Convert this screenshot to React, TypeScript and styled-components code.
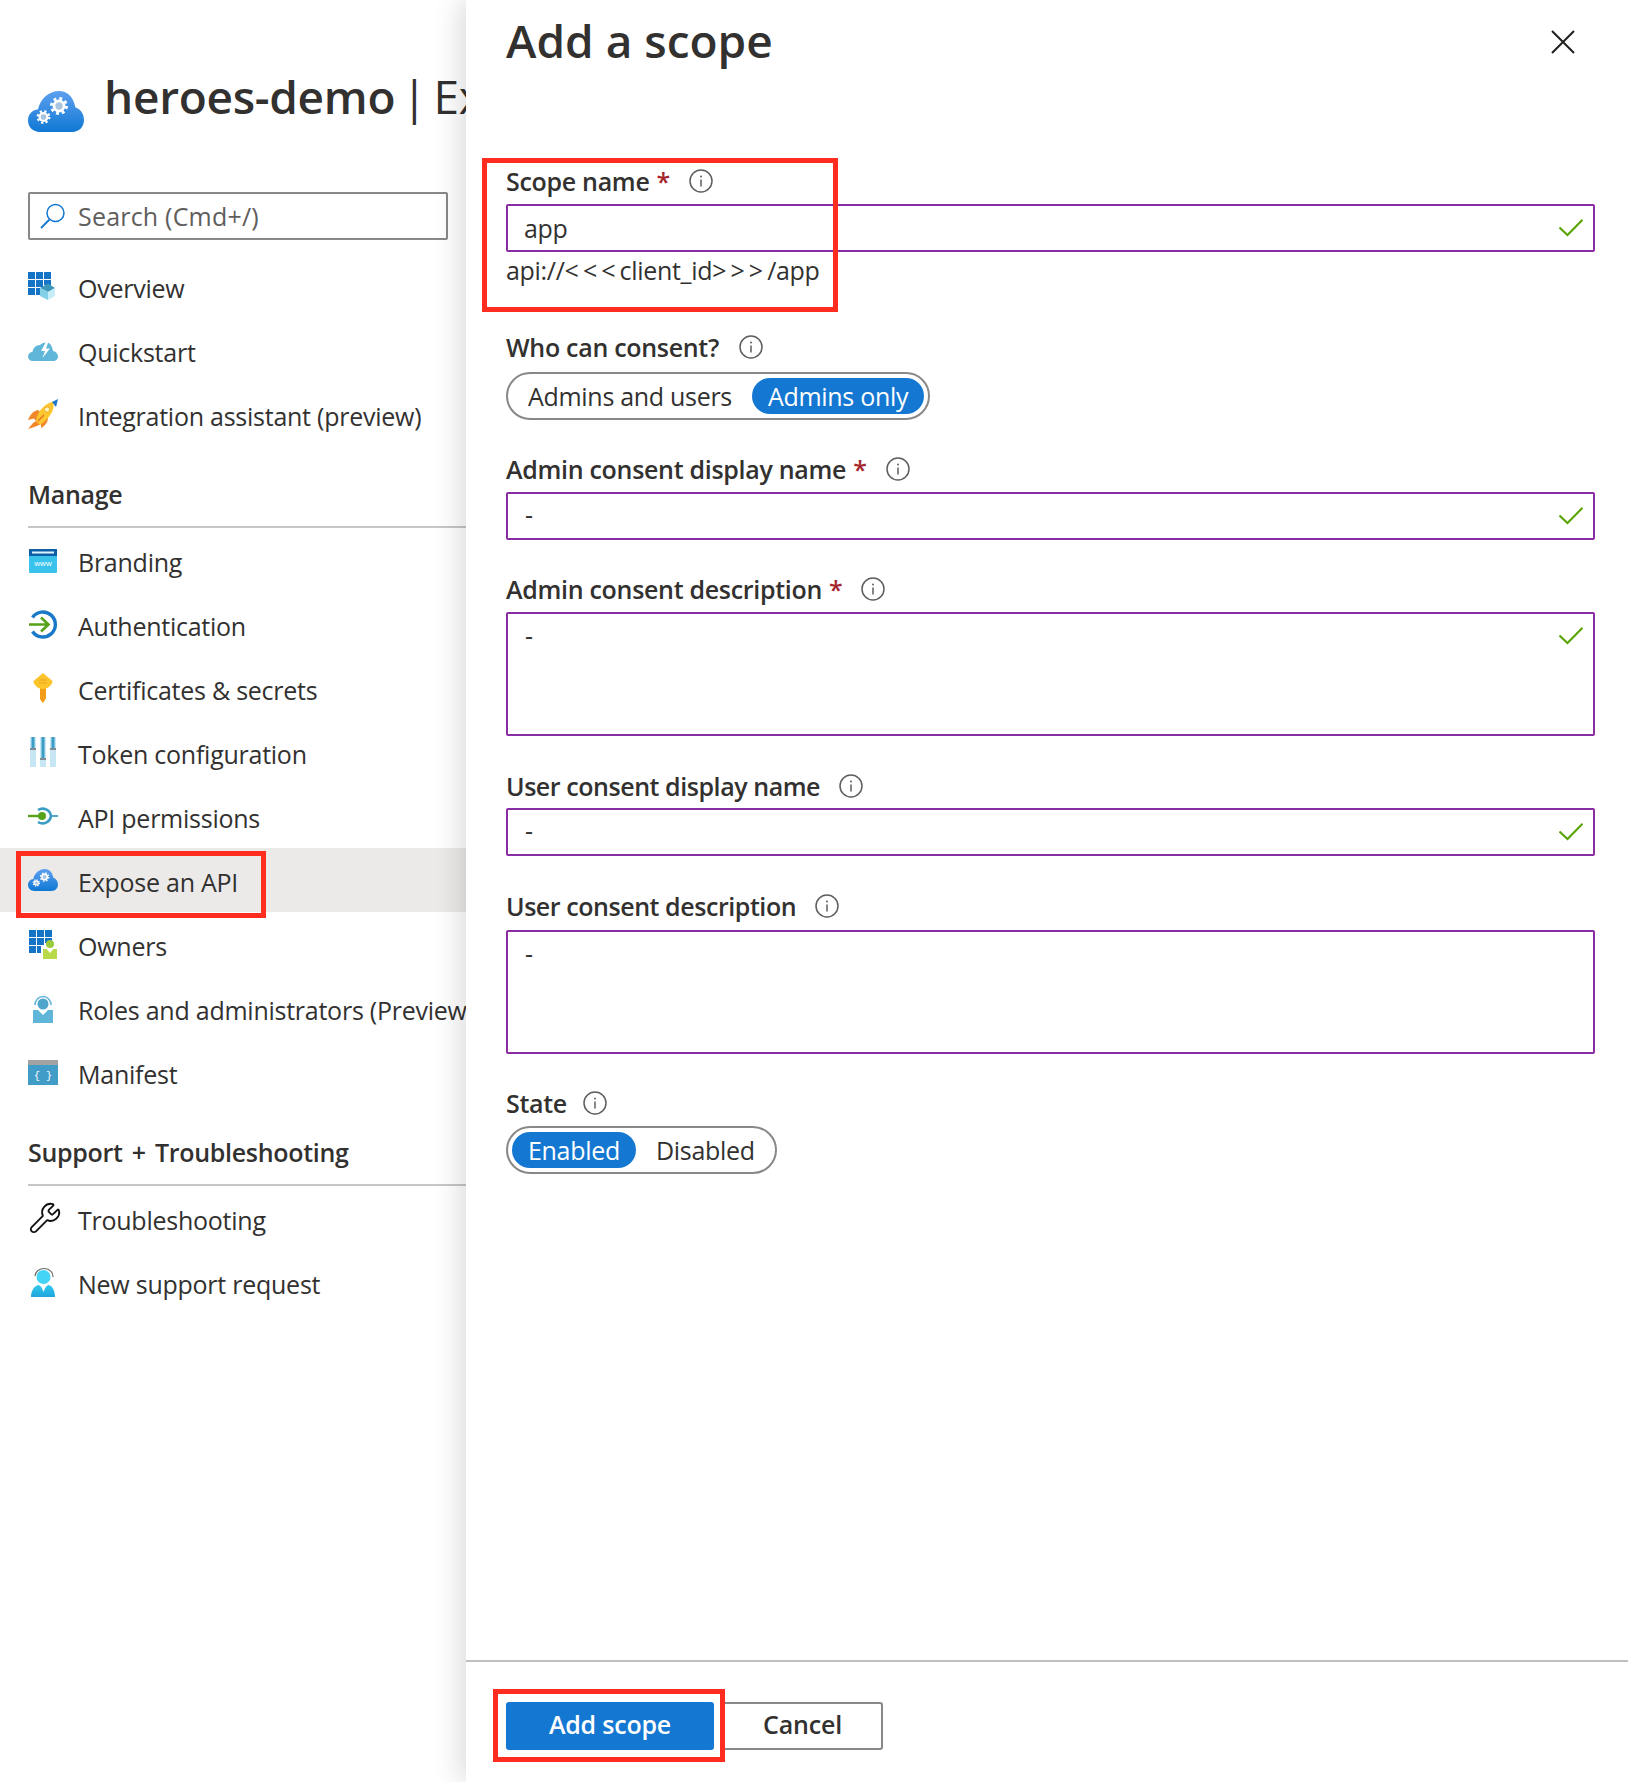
import React from 'react'
import styled, { createGlobalStyle } from 'styled-components'
import { Wrench } from 'lucide-react'

const GlobalStyle = createGlobalStyle`
  html, body {
    margin: 0;
    padding: 0;
    background: #fff;
  }
  * { box-sizing: border-box; }
`

const BLUE = '#1478d2'
const PURPLE = '#8a2da3'

const Gear = ({ x, y, r }: { x: number; y: number; r: number }) => (
  <g>
    <circle cx={x} cy={y} r={r * 0.92} fill="#fff" />
    <circle cx={x} cy={y} r={r * 1.08} fill="none" stroke="#fff" strokeWidth={r * 0.4} strokeDasharray={`${r * 0.42} ${r * 0.43}`} />
    <circle cx={x} cy={y} r={r * 0.52} fill="#a9c4de" />
  </g>
)

const CloudGears = ({ size }: { size: number }) => (
  <svg width={size} height={size * 0.75} viewBox="0 0 56 42">
    <defs>
      <linearGradient id={`cloud${size}`} x1="0" y1="0" x2="0" y2="1">
        <stop offset="0" stopColor="#5ea0ef" />
        <stop offset="1" stopColor="#0f78d4" />
      </linearGradient>
    </defs>
    <path d="M12 41C5 41 0 36 0 29.500C0 23.500 4 19 10 18.500C12 8 21 0 31 0C39 0 45 5 47.500 16.500C52.500 18 56 23 56 29C56 36 51 41 44 41Z" fill={`url(#cloud${size})`} />
    <Gear x={15.500} y={26} r={5.400} />
    <Gear x={31} y={15} r={7} />
  </svg>
)

const GridSquares = ({ fill }: { fill: string }) => (
  <g fill={fill}>
    <rect x="0" y="1" width="7" height="7" />
    <rect x="8" y="1" width="7" height="7" />
    <rect x="16" y="1" width="7" height="7" />
    <rect x="0" y="9" width="7" height="7" />
    <rect x="8" y="9" width="7" height="7" />
    <rect x="16" y="9" width="7" height="5" />
    <rect x="0" y="17" width="7" height="7" />
    <rect x="8" y="17" width="4" height="7" />
  </g>
)

const OverviewIcon = () => (
  <svg width="30" height="30" viewBox="0 0 30 30">
    <GridSquares fill="#1473c5" />
    <path d="M12 17L20 12.500L27 17L20 21Z" fill="#3b97b8" />
    <path d="M12 17L20 21V29L12 25Z" fill="#83cfe8" />
    <path d="M27 17L20 21V29L27 25Z" fill="#c6edf8" />
  </svg>
)

const QuickstartIcon = () => (
  <svg width="30" height="30" viewBox="0 0 30 30">
    <path d="M5 26C2 26 0 24 0 21.500C0 19 2 17 4.500 17C5 13 8 10 12 10C14 8 19 6 22 9C24 11 24.500 14 25 16C28 16.500 30 19 30 21.500C30 24 28 26 25 26Z" fill="#5fb6d9" />
    <path d="M19 5L13 16H17L14.500 23L22 13.500H18L21 5Z" fill="#fff" />
  </svg>
)

const RocketIcon = () => (
  <svg width="30" height="30" viewBox="0 0 30 30">
    <path d="M10 11C5 12 2 16 0 21L6 19.500L8 22L5 24L0 30C6 28 10 27 13 25L13 29C17 27 20 23 20 19Z" fill="#f0872a" />
    <path d="M8 22C9 13 16 5 25 2.500C28 10 21 20 12 26Z" fill="#fcc72e" />
    <circle cx="19" cy="10.500" r="2.600" fill="#fff4c2" stroke="#e8a21a" strokeWidth="0.8" />
    <path d="M24 3L30 0L28 8Z" fill="#1b78c8" />
    <path d="M10 22L16 16" stroke="#e8772a" strokeWidth="1.600" />
  </svg>
)

const BrandingIcon = () => (
  <svg width="30" height="30" viewBox="0 0 30 30">
    <rect x="1" y="4" width="28" height="24" rx="1" fill="#38c2ec" />
    <rect x="1" y="4" width="28" height="7" fill="#0f5fa6" />
    <rect x="4" y="6.500" width="22" height="2" fill="#dff3fb" />
    <text x="15" y="20.500" fontFamily="'Liberation Sans', sans-serif" fontSize="8" textAnchor="middle" fill="#fff">www</text>
  </svg>
)

const AuthIcon = () => (
  <svg width="30" height="30" viewBox="0 0 30 30">
    <path d="M4.500 8.500A12.500 12.500 0 1 1 4.500 22.500" fill="none" stroke="#1a78c8" strokeWidth="3.400" />
    <path d="M1 15.500H20M13 8.500L20.500 15.500L13 22.500" fill="none" stroke="#57a21b" strokeWidth="2.600" />
  </svg>
)

const KeyIcon = () => (
  <svg width="30" height="30" viewBox="0 0 30 30">
    <path d="M15 0L24.500 8C24.500 12 20 15 18 15.500V25L15 30L12 26V15.500C10 15 5.500 12 5.500 8Z" fill="#fcc52c" />
    <path d="M18 15.500V25L15 30L12 26V15.500C14 16.500 16 16.500 18 15.500Z" fill="#f39c18" />
    <path d="M11 7H19M11 10H19" stroke="#f0a020" strokeWidth="1" />
  </svg>
)

const TokenIcon = () => (
  <svg width="30" height="30" viewBox="0 0 30 30">
    <g fill="#c6e6f3">
      <rect x="2" y="0" width="6" height="30" />
      <rect x="12" y="0" width="6" height="30" />
      <rect x="22" y="0" width="6" height="30" />
    </g>
    <g fill="#3b9cc4">
      <rect x="3.500" y="0" width="3" height="11" />
      <rect x="13.500" y="0" width="3" height="21" />
      <rect x="23.500" y="0" width="3" height="11" />
    </g>
    <g fill="#7f8a92">
      <rect x="2" y="11" width="6" height="2" />
      <rect x="12" y="21" width="6" height="2" />
      <rect x="22" y="11" width="6" height="2" />
    </g>
  </svg>
)

const ApiIcon = () => (
  <svg width="30" height="30" viewBox="0 0 30 30">
    <path d="M10 9A8.500 8.500 0 0 1 23 15A8.500 8.500 0 0 1 10 21" fill="none" stroke="#3c9dc4" strokeWidth="2.600" />
    <path d="M23 15H30" stroke="#3c9dc4" strokeWidth="1.800" />
    <path d="M0 15H14" stroke="#57a21b" strokeWidth="2.400" />
    <circle cx="14" cy="15" r="4" fill="#57a21b" />
  </svg>
)

const OwnersIcon = () => (
  <svg width="30" height="30" viewBox="0 0 30 30">
    <g transform="translate(1 0)">
      <GridSquares fill="#1473c5" />
    </g>
    <circle cx="22" cy="15" r="4" fill="#9ccb3b" />
    <path d="M15 20L18.500 20L22 24L25.500 20L29 20V30H15Z" fill="#b8d94a" />
  </svg>
)

const RolesIcon = () => (
  <svg width="30" height="30" viewBox="0 0 30 30">
    <path d="M7 12A8 8.500 0 0 1 23 12" fill="none" stroke="#5fb6d9" strokeWidth="1.600" />
    <circle cx="15" cy="11" r="5.500" fill="#4fa5cc" />
    <path d="M5 17H10L15 22L20 17H25V30H5Z" fill="#5fb6d9" />
  </svg>
)

const ManifestIcon = () => (
  <svg width="30" height="30" viewBox="0 0 30 30">
    <rect x="0" y="3" width="30" height="25" fill="#429cc8" />
    <rect x="0" y="3" width="30" height="5" fill="#a3a3a3" />
    <text x="15" y="22" fontFamily="'Liberation Mono', monospace" fontSize="10" textAnchor="middle" fill="#fff">{'{ }'}</text>
  </svg>
)

const SupportIcon = () => (
  <svg width="30" height="30" viewBox="0 0 30 30">
    <defs>
      <linearGradient id="supportBody" x1="0" y1="0" x2="0" y2="1">
        <stop offset="0" stopColor="#32c8ee" />
        <stop offset="1" stopColor="#1fa5dc" />
      </linearGradient>
    </defs>
    <path d="M7 9A9 8 0 0 1 25 10" fill="none" stroke="#6b6b6b" strokeWidth="1.200" />
    <circle cx="15.500" cy="10" r="7" fill="#44d4f5" />
    <path d="M3 30C3 23 7 18 11 18L15.500 22L20 18C24 18 27 23 27 30Z" fill="url(#supportBody)" />
    <path d="M13.500 20H17.500L15.500 25Z" fill="#fff" />
  </svg>
)

const SearchIcon = () => (
  <svg width="26" height="26" viewBox="0 0 26 26">
    <circle cx="15.500" cy="10" r="8.500" fill="none" stroke={BLUE} strokeWidth="1.500" />
    <path d="M9.500 16.500L1 25" stroke={BLUE} strokeWidth="1.800" />
  </svg>
)

const InfoIcon = ({ gap = 20 }: { gap?: number }) => (
  <InfoWrap $gap={gap} viewBox="0 0 24 24">
    <circle cx="12" cy="12" r="11" fill="none" stroke="#605e5c" strokeWidth="1.500" />
    <path d="M12 10.500V17.500" stroke="#605e5c" strokeWidth="1.500" />
    <circle cx="12" cy="7.500" r="1" fill="#605e5c" />
  </InfoWrap>
)

const CheckIcon = ({ multiline }: { multiline?: boolean }) => (
  <CheckWrap $multiline={multiline} viewBox="0 0 24 18">
    <path d="M0.500 8.500L8.500 16L23.500 0.800" fill="none" stroke="#57a300" strokeWidth="2" />
  </CheckWrap>
)

const navTop = [
  { label: 'Overview', icon: <OverviewIcon /> },
  { label: 'Quickstart', icon: <QuickstartIcon /> },
  { label: 'Integration assistant (preview)', icon: <RocketIcon /> },
]

const navManage = [
  { label: 'Branding', icon: <BrandingIcon /> },
  { label: 'Authentication', icon: <AuthIcon /> },
  { label: 'Certificates & secrets', icon: <KeyIcon /> },
  { label: 'Token configuration', icon: <TokenIcon /> },
  { label: 'API permissions', icon: <ApiIcon /> },
  { label: 'Expose an API', icon: <CloudGears size={30} />, active: true },
  { label: 'Owners', icon: <OwnersIcon /> },
  { label: 'Roles and administrators (Preview)', icon: <RolesIcon /> },
  { label: 'Manifest', icon: <ManifestIcon /> },
]

const navSupport = [
  { label: 'Troubleshooting', icon: <Wrench size={34} strokeWidth={1.3} color="#111" /> },
  { label: 'New support request', icon: <SupportIcon /> },
]

interface NavItem {
  label: string
  icon: React.ReactNode
  active?: boolean
}

const NavList = ({ items }: { items: Array<NavItem> }) => (
  <nav>
    {items.map(item => (
      <NavRow key={item.label} $active={item.active}>
        <IconSlot>{item.icon}</IconSlot>
        <NavLabel>{item.label}</NavLabel>
      </NavRow>
    ))}
  </nav>
)

interface FieldModel {
  label: string
  value?: string
  required?: boolean
  valid?: boolean
  multiline?: boolean
  tight?: boolean
  top: number
  lift?: number
}

const FieldBlock = ({ label, value = '-', required, valid, multiline, tight, top, lift = 2 }: FieldModel) => (
  <Field $top={top}>
    <FieldLabel $lift={lift} $tight={tight}>
      {label}
      {required ? <Star>*</Star> : null}
      <InfoIcon gap={tight ? 19 : 20} />
    </FieldLabel>
    <InputBox $multiline={multiline}>
      <InputText $dash={value === '-'} $multiline={multiline}>{value}</InputText>
      {valid ? <CheckIcon multiline={multiline} /> : null}
    </InputBox>
  </Field>
)

const App = () => (
  <Page>
    <GlobalStyle />
    <Sidebar>
      <TitleRow>
        <TitleIcon><CloudGears size={56} /></TitleIcon>
        <Title><b>heroes-demo</b> | Expose an API</Title>
      </TitleRow>
      <SearchBox>
        <SearchIcon />
        <span>Search (Cmd+/)</span>
      </SearchBox>
      <TopNav>
        <NavList items={navTop} />
      </TopNav>
      <SectionHead $height={82}>Manage</SectionHead>
      <NavList items={navManage} />
      <SectionHead $height={82}>Support + Troubleshooting</SectionHead>
      <NavList items={navSupport} />
    </Sidebar>

    <Panel>
      <PanelHead>
        <PanelTitle>Add a scope</PanelTitle>
        <CloseIcon viewBox="0 0 24 24">
          <path d="M1 1L23 23M23 1L1 23" stroke="#201f1e" strokeWidth="2" />
        </CloseIcon>
      </PanelHead>

      <Form>
        <FieldBlock label="Scope name" value="app" required valid top={0} />
        <Helper>api://<Angle>&lt;&lt;&lt;</Angle>client_id<Angle>&gt;&gt;&gt;</Angle>/app</Helper>

        <Field $top={34}>
          <FieldLabel $lift={4} $tall>Who can consent?<InfoIcon /></FieldLabel>
          <Toggle>
            <ToggleOption>Admins and users</ToggleOption>
            <ToggleOption $on>Admins only</ToggleOption>
          </Toggle>
        </Field>

        <FieldBlock label="Admin consent display name" required valid top={28} />
        <FieldBlock label="Admin consent description" required valid multiline top={28} />
        <FieldBlock label="User consent display name" valid tight top={28} lift={0} />
        <FieldBlock label="User consent description" multiline tight top={30} lift={4} />

        <Field $top={26}>
          <FieldLabel $lift={0} $tall>State<InfoIcon gap={16} /></FieldLabel>
          <Toggle>
            <ToggleOption $on>Enabled</ToggleOption>
            <ToggleOption>Disabled</ToggleOption>
          </Toggle>
        </Field>
      </Form>

      <PanelFooter>
        <PrimaryButton>Add scope</PrimaryButton>
        <SecondaryButton>Cancel</SecondaryButton>
      </PanelFooter>
    </Panel>

    <Callout $x={482} $y={158} $w={356} $h={154} />
    <Callout $x={16} $y={851} $w={250} $h={67} />
    <Callout $x={493} $y={1689} $w={232} $h={73} />
  </Page>
)

const FONT = `'Open Sans', 'Noto Sans', sans-serif`

const Page = styled.div`
  position: relative;
  display: flex;
  width: 1628px;
  height: 1782px;
  overflow: hidden;
  font-family: ${FONT};
  color: #323130;
`

const Sidebar = styled.aside`
  flex: 0 0 466px;
  width: 466px;
  overflow: hidden;
`

const TitleRow = styled.div`
  display: flex;
  align-items: flex-start;
  gap: 20px;
  height: 192px;
  padding: 62px 0 0 28px;
  white-space: nowrap;
`

const TitleIcon = styled.div`
  flex: none;
  margin-top: 29px;
`

const Title = styled.h1`
  margin: 0;
  font-size: 46px;
  line-height: 68px;
  font-weight: 400;
  letter-spacing: -0.3px;
  word-spacing: -5px;

  b { font-weight: 600; }
`

const SearchBox = styled.div`
  display: flex;
  align-items: center;
  gap: 12px;
  width: 420px;
  height: 48px;
  margin-left: 28px;
  padding-left: 10px;
  border: 2px solid #8a8886;
  border-radius: 2px;
  font-size: 25px;
  letter-spacing: 0.2px;
  color: #605e5c;
`

const TopNav = styled.div`
  margin-top: 14px;
`

const NavRow = styled.div<{ $active?: boolean }>`
  display: flex;
  align-items: center;
  height: 64px;
  padding-left: 28px;
  background: ${p => (p.$active ? '#ebeae9' : 'transparent')};
  white-space: nowrap;
`

const IconSlot = styled.div`
  flex: none;
  display: flex;
  align-items: center;
  width: 50px;
  height: 30px;
`

const NavLabel = styled.span`
  padding-top: 4px;
  font-size: 25px;
  line-height: 36px;
  letter-spacing: -0.25px;
`

const SectionHead = styled.h2<{ $height: number }>`
  display: flex;
  align-items: flex-end;
  height: ${p => p.$height}px;
  margin: 0 0 0 28px;
  padding-bottom: 14px;
  border-bottom: 2px solid #c8c6c4;
  font-size: 25px;
  line-height: 36px;
  font-weight: 600;
  letter-spacing: -0.3px;
  word-spacing: 3px;
`

const Panel = styled.main`
  position: relative;
  flex: 1;
  display: flex;
  flex-direction: column;
  background: #fff;
  box-shadow: -6px 0 26px rgba(0, 0, 0, 0.14);
`

const PanelHead = styled.header`
  display: flex;
  justify-content: space-between;
  flex: 0 0 160px;
  padding: 6px 53px 0 40px;
`

const PanelTitle = styled.h1`
  margin: 0;
  font-size: 46px;
  line-height: 68px;
  font-weight: 600;
`

const CloseIcon = styled.svg`
  width: 24px;
  height: 24px;
  margin-top: 24px;
`

const Form = styled.div`
  flex: 1;
  padding: 0 33px 0 40px;
`

const Field = styled.div<{ $top: number }>`
  margin-top: ${p => p.$top}px;
`

const FieldLabel = styled.label<{ $tall?: boolean; $tight?: boolean; $lift: number }>`
  display: flex;
  align-items: center;
  height: ${p => (p.$tall ? 46 : 44)}px;
  padding-bottom: ${p => p.$lift}px;
  font-size: 25px;
  font-weight: 600;
  letter-spacing: ${p => (p.$tight ? -0.44 : -0.3)}px;
`

const Star = styled.span`
  margin: 0 -1px 0 7px;
  color: #a4262c;
`

const InfoWrap = styled.svg<{ $gap: number }>`
  flex: none;
  width: 24px;
  height: 24px;
  margin-left: ${p => p.$gap}px;
`

const InputBox = styled.div<{ $multiline?: boolean }>`
  display: flex;
  justify-content: space-between;
  align-items: ${p => (p.$multiline ? 'flex-start' : 'center')};
  height: ${p => (p.$multiline ? 124 : 48)}px;
  padding: ${p => (p.$multiline ? '5px 10px 0 16px' : '0 10px 0 16px')};
  border: 2px solid ${PURPLE};
  border-radius: 2px;
  font-size: 25px;
  line-height: 36px;
  letter-spacing: -0.3px;
`

const InputText = styled.span<{ $dash?: boolean; $multiline?: boolean }>`
  margin-top: ${p => (p.$dash ? (p.$multiline ? -2 : -4) : 0)}px;
  padding-left: ${p => (p.$dash ? 1 : 0)}px;
`

const CheckWrap = styled.svg<{ $multiline?: boolean }>`
  flex: none;
  width: 24px;
  height: 18px;
  margin-top: ${p => (p.$multiline ? 8 : 0)}px;
`

const Helper = styled.div`
  height: 40px;
  font-size: 25px;
  line-height: 36px;
  letter-spacing: -0.3px;
`

const Angle = styled.span`
  letter-spacing: 4px;
`

const Toggle = styled.div`
  display: inline-flex;
  align-items: center;
  gap: 4px;
  height: 48px;
  padding: 0 4px;
  border: 2px solid #8a8886;
  border-radius: 24px;
`

const ToggleOption = styled.span<{ $on?: boolean }>`
  height: 36px;
  padding: 0 16px;
  border-radius: 18px;
  font-size: 25px;
  line-height: 36px;
  letter-spacing: -0.3px;
  background: ${p => (p.$on ? BLUE : 'transparent')};
  color: ${p => (p.$on ? '#fff' : '#323130')};
`

const PanelFooter = styled.footer`
  display: flex;
  gap: 8px;
  padding: 40px 0 32px 40px;
  border-top: 2px solid #c0bfbe;
`

const PrimaryButton = styled.button`
  width: 208px;
  height: 48px;
  padding: 0 0 4px;
  border: none;
  border-radius: 3px;
  background: ${BLUE};
  color: #fff;
  font-family: ${FONT};
  font-size: 25px;
  font-weight: 600;
  letter-spacing: -0.2px;
`

const SecondaryButton = styled(PrimaryButton)`
  width: 161px;
  border: 2px solid #8a8886;
  background: #fff;
  color: #323130;
`

const Callout = styled.div<{ $x: number; $y: number; $w: number; $h: number }>`
  position: absolute;
  left: ${p => p.$x}px;
  top: ${p => p.$y}px;
  width: ${p => p.$w}px;
  height: ${p => p.$h}px;
  border: 5px solid #ff2d20;
`

export default App
